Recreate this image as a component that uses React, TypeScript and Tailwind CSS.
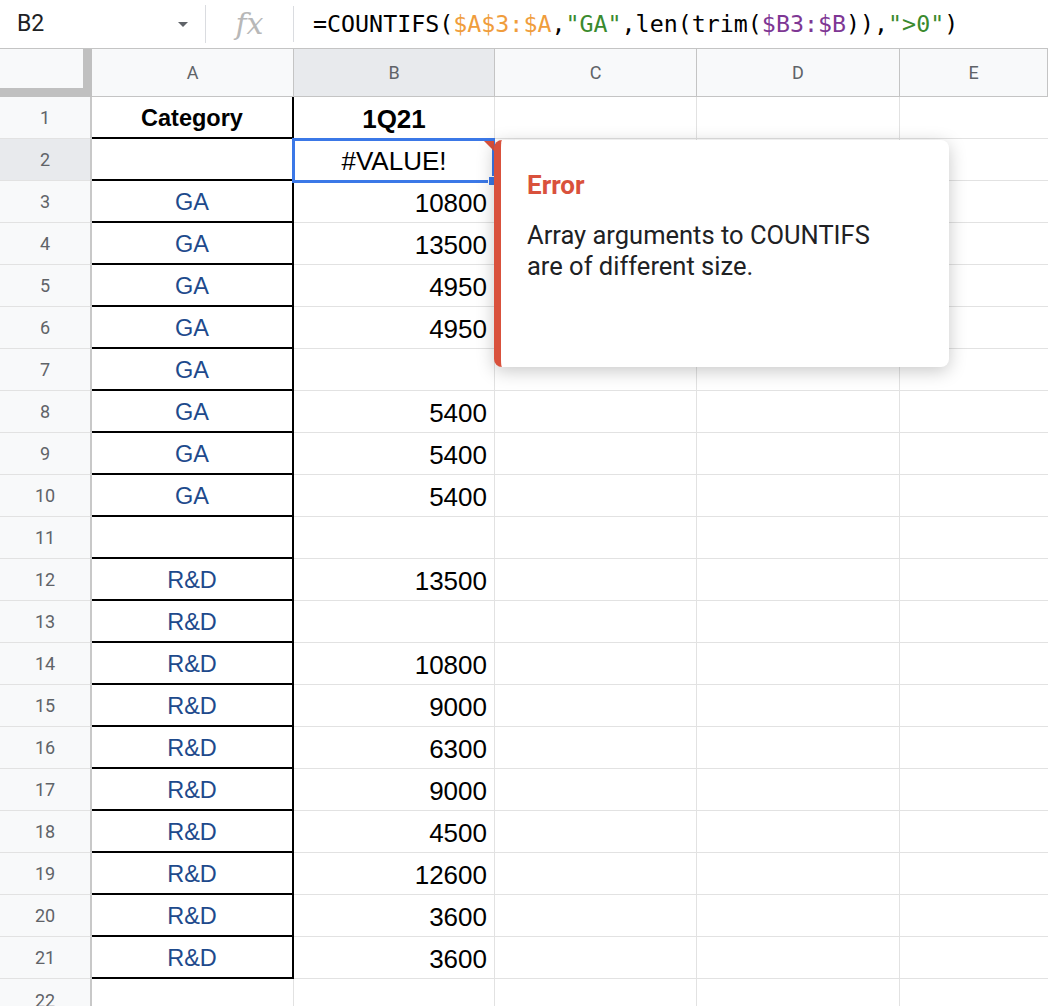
import React from "react";

type Row = { n: number; a: string; b: string; bold?: boolean; center?: boolean };

const rows: Row[] = [
  { n: 1, a: "Category", b: "1Q21", bold: true, center: true },
  { n: 2, a: "", b: "#VALUE!", center: true },
  { n: 3, a: "GA", b: "10800" },
  { n: 4, a: "GA", b: "13500" },
  { n: 5, a: "GA", b: "4950" },
  { n: 6, a: "GA", b: "4950" },
  { n: 7, a: "GA", b: "" },
  { n: 8, a: "GA", b: "5400" },
  { n: 9, a: "GA", b: "5400" },
  { n: 10, a: "GA", b: "5400" },
  { n: 11, a: "", b: "" },
  { n: 12, a: "R&D", b: "13500" },
  { n: 13, a: "R&D", b: "" },
  { n: 14, a: "R&D", b: "10800" },
  { n: 15, a: "R&D", b: "9000" },
  { n: 16, a: "R&D", b: "6300" },
  { n: 17, a: "R&D", b: "9000" },
  { n: 18, a: "R&D", b: "4500" },
  { n: 19, a: "R&D", b: "12600" },
  { n: 20, a: "R&D", b: "3600" },
  { n: 21, a: "R&D", b: "3600" },
];

function FormulaBar() {
  return (
    <div className="flex h-[48px] items-center bg-white font-['Roboto',sans-serif]">
      <div className="flex w-[205px] items-center justify-between pl-[17px] pr-[17px]">
        <span className="text-[23px] text-[#202124]">B2</span>
        <span className="h-0 w-0 border-x-[5px] border-t-[5px] border-x-transparent border-t-[#5f6368]" />
      </div>
      <div className="h-[38px] w-px bg-[#dadce0]" />
      <div className="flex w-[87px] items-center justify-center">
        <span className="font-['DejaVu_Serif',serif] text-[30px] italic leading-none text-[#b8b8b8]">fx</span>
      </div>
      <div className="h-[36px] w-px bg-[#dadce0]" />
      <div className="whitespace-pre pl-[19px] font-['DejaVu_Sans_Mono',monospace] text-[23.3px] text-black">
        =COUNTIFS(<span className="text-[#f09d3c]">$A$3:$A</span>,<span className="text-[#3a8a2e]">"GA"</span>,len(trim(<span className="text-[#7e3794]">$B3:$B</span>)),<span className="text-[#3a8a2e]">"&gt;0"</span>)
      </div>
    </div>
  );
}

function ColumnHeaders() {
  const cols = [
    { l: "A", w: "w-[202px]", sel: false },
    { l: "B", w: "w-[201px]", sel: true },
    { l: "C", w: "w-[202px]", sel: false },
    { l: "D", w: "w-[203px]", sel: false },
    { l: "E", w: "flex-1", sel: false },
  ];
  return (
    <div className="flex h-[49px] border-t border-[#c4c4c4] font-['Roboto',sans-serif] text-[18px] text-[#5f6368]">
      <div className="w-[92px] border-r-[9px] border-b-[9px] border-[#c0c0c0] bg-[#f8f9fa]" />
      {cols.map((c) => (
        <div
          key={c.l}
          className={`${c.w} flex items-center justify-center border-r border-b border-[#c4c4c4] ${c.sel ? "bg-[#e8eaed]" : "bg-[#f8f9fa]"}`}
        >
          {c.l}
        </div>
      ))}
    </div>
  );
}

function DataRow({ r }: { r: Row }) {
  const sel = r.n === 2;
  return (
    <div className="flex h-[42px]">
      <div
        className={`flex w-[92px] items-center justify-center border-r-2 border-b border-r-[#c8c8c8] border-b-[#e2e2e2] font-['Roboto',sans-serif] text-[18px] text-[#5f6368] ${sel ? "bg-[#e8eaed]" : "bg-[#f8f9fa]"}`}
      >
        {r.n}
      </div>
      <div
        className={`flex w-[202px] items-center justify-center border-r-2 border-b-2 border-black pt-[3px] font-['Liberation_Sans',Arial,sans-serif] text-[23.5px] ${r.bold ? "font-bold text-black" : "text-[#1e4a8c]"}`}
      >
        {r.a}
      </div>
      <div
        className={`flex w-[201px] items-center border-r border-b border-[#e2e2e2] px-[7px] pt-[3px] font-['Liberation_Sans',Arial,sans-serif] text-[26px] text-black ${r.center ? "justify-center" : "justify-end"} ${r.bold ? "font-bold" : ""}`}
      >
        {r.b}
      </div>
      <div className="w-[202px] border-r border-b border-[#e2e2e2]" />
      <div className="w-[203px] border-r border-b border-[#e2e2e2]" />
      <div className="flex-1 border-b border-[#e2e2e2]" />
    </div>
  );
}

function LastRow() {
  return (
    <div className="flex h-[42px]">
      <div className="flex w-[92px] items-center justify-center border-r-2 border-r-[#c8c8c8] bg-[#f8f9fa] font-['Roboto',sans-serif] text-[18px] text-[#5f6368]">
        22
      </div>
      <div className="w-[202px] border-r border-[#e2e2e2]" />
      <div className="w-[201px] border-r border-[#e2e2e2]" />
      <div className="w-[202px] border-r border-[#e2e2e2]" />
      <div className="w-[203px] border-r border-[#e2e2e2]" />
      <div className="flex-1" />
    </div>
  );
}

export default function App() {
  return (
    <div className="relative h-[1006px] w-[1048px] overflow-hidden bg-white">
      <FormulaBar />
      <ColumnHeaders />
      {rows.map((r) => (
        <DataRow key={r.n} r={r} />
      ))}
      <LastRow />

      {/* selection on B2 */}
      <div className="pointer-events-none absolute left-[292px] top-[138px] h-[45px] w-[203px] border-[3px] border-[#3b78e7]">
        <div className="absolute right-[-2px] top-[0px] h-0 w-0 border-l-[10px] border-t-[10px] border-l-transparent border-t-[#d9513c]" />
        <div className="absolute bottom-[-6px] right-[-6px] h-[10px] w-[10px] border border-white bg-[#3b78e7]" />
      </div>

      {/* error tooltip */}
      <div className="absolute left-[494px] top-[140px] h-[227px] w-[455px] rounded-[8px] border-l-[7px] border-[#d9513c] bg-white pl-[26px] pr-[48px] pt-[29px] font-['Roboto',sans-serif] shadow-[0_4px_18px_rgba(0,0,0,0.22)]">
        <div className="text-[26px] font-bold leading-[32px] text-[#d9513c]">Error</div>
        <div className="mt-[19px] text-[25.5px] leading-[31px] text-[#202124]">
          Array arguments to COUNTIFS are of different size.
        </div>
      </div>
    </div>
  );
}
